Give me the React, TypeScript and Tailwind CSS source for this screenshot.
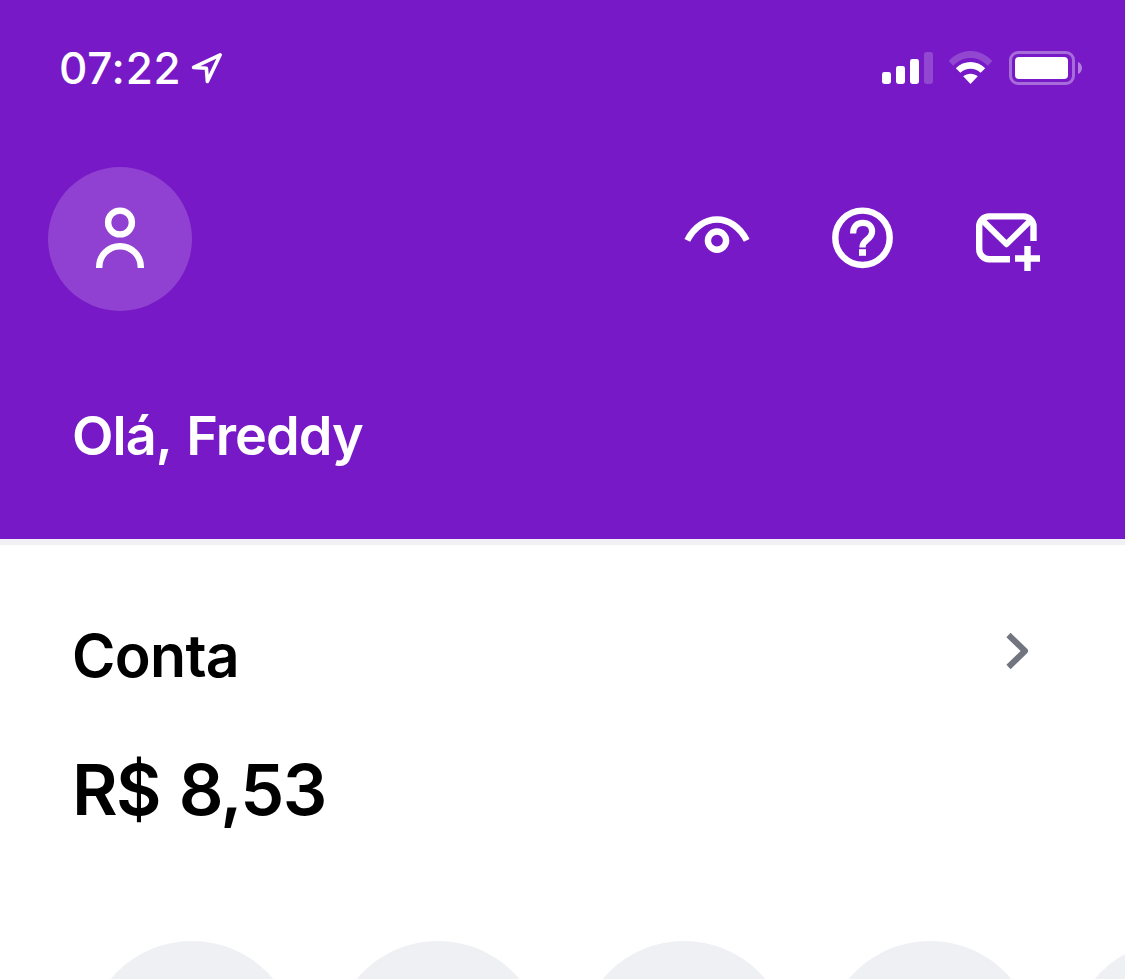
function StatusBar() {
  return (
    <div className="flex h-[136px] items-center pr-[42px] pl-[59px]">
      <span className="text-[44px] leading-none font-medium tracking-[0.7px]">07:22</span>
      <svg className="mt-px ml-[9px]" width="34" height="34" viewBox="0 0 34 34" fill="none">
        <path
          d="M30.2 2.8 3.6 15.4 16.4 16.3 17.4 29.5Z"
          stroke="currentColor"
          strokeWidth="3.6"
          strokeLinejoin="round"
        />
      </svg>
      <div className="ml-auto flex items-center">
        <svg width="51" height="34" viewBox="0 0 51 34" fill="currentColor">
          <rect x="0" y="21" width="9" height="12" rx="2.4" />
          <rect x="14" y="15" width="9" height="18" rx="2.4" />
          <rect x="28" y="8" width="9" height="25" rx="2.4" />
          <rect x="42" y="1" width="9" height="32" rx="2.4" opacity="0.2" />
        </svg>
        <svg className="mr-4 ml-[15px]" width="45" height="34" viewBox="0 0 45 34" fill="currentColor">
          <path
            d="M.7 10.1C13-3.4 32-3.4 44.3 10.1L39.8 14.7C30 4.3 15 4.3 5.2 14.7Z"
            opacity="0.2"
          />
          <path d="M7.8 17.3C16 9 29 9 37.2 17.3L32.6 21.8C27 16.5 18 16.5 12.4 21.8Z" />
          <path d="M15.2 25.2C19.3 21.8 25.7 21.8 29.8 25.2L22.5 33Z" />
        </svg>
        <svg width="74" height="34" viewBox="0 0 74 34" fill="currentColor">
          <rect
            x="1.5"
            y="1.5"
            width="63"
            height="31"
            rx="7.5"
            fill="none"
            stroke="currentColor"
            strokeWidth="3"
            opacity="0.36"
          />
          <rect x="6" y="6" width="53" height="22" rx="4" />
          <path d="M69 11C74.3 13 74.3 21 69 23Z" opacity="0.45" />
        </svg>
      </div>
    </div>
  );
}

function UserIcon() {
  return (
    <svg
      className="-mt-[5px]"
      width="48"
      height="62"
      viewBox="0 0 48 62"
      fill="none"
      stroke="currentColor"
      strokeWidth="6.4"
    >
      <circle cx="24" cy="16.5" r="11.9" />
      <path d="M3.2 62V61A20.8 20.8 0 0 1 44.8 61V62" />
    </svg>
  );
}

function EyeIcon() {
  return (
    <svg width="66" height="38" viewBox="0 0 66 38" fill="none" stroke="currentColor">
      <path d="M3.3 24.4C17.5-3.4 48.5-3.4 62.7 24.4" strokeWidth="6.4" />
      <circle cx="33" cy="24.6" r="9.1" strokeWidth="6.4" />
    </svg>
  );
}

function HelpIcon() {
  return (
    <svg width="62" height="62" viewBox="0 0 62 62" fill="none" stroke="currentColor">
      <circle cx="31.5" cy="30.8" r="27.2" strokeWidth="6.4" />
      <path
        d="M22.1 26.4C22.1 19.5 25.9 15.9 31.7 15.9C37.5 15.9 41.1 19.4 41.1 24.3C41.1 28.3 39.2 30.4 36 32.7C32.7 35.1 31.5 36.9 31.5 40.4"
        strokeWidth="6.2"
      />
      <path d="M31.5 42.2V48.8" strokeWidth="7" />
    </svg>
  );
}

function InviteIcon() {
  return (
    <svg width="64" height="58" viewBox="0 0 64 58" fill="none" stroke="currentColor" strokeWidth="6.4">
      <path d="M34 46.2H13.2A10 10 0 0 1 3.2 36.2V13.2A10 10 0 0 1 13.2 3.4H47.5A10 10 0 0 1 57.5 13.2V28" />
      <path d="M6 7 30.5 31.2 55 7" strokeLinejoin="round" strokeWidth="6" />
      <path d="M51.5 33V58M39 45.5H64" />
    </svg>
  );
}

export default function App() {
  return (
    <div className="h-[979px] w-[1125px] overflow-hidden bg-white font-['Inter',sans-serif] text-black">
      <header className="h-[539px] bg-[#7719c6] text-white">
        <StatusBar />
        <div className="mt-[31px] flex items-center pr-[85px] pl-12">
          <button className="flex size-36 items-center justify-center rounded-full bg-[#9041d1]">
            <UserIcon />
          </button>
          <div className="ml-auto flex items-center">
            <button className="mr-[81px] -mt-2">
              <EyeIcon />
            </button>
            <button className="mr-[83px] -mt-0.5">
              <HelpIcon />
            </button>
            <button className="mt-1.5">
              <InviteIcon />
            </button>
          </div>
        </div>
        <h1 className="mt-[85px] ml-[72px] text-[54px] leading-[80px] font-semibold tracking-[-1px] [word-spacing:3px]">
          Olá, Freddy
        </h1>
      </header>
      <div className="h-1.5 bg-[#f0f0f5]" />
      <main>
        <section className="pt-[71px] pr-[96px] pl-[72px]">
          <div className="flex items-center justify-between">
            <h2 className="text-[59px] leading-[80px] font-semibold tracking-[-0.7px]">Conta</h2>
            <svg className="-mt-2.5" width="24" height="38" viewBox="0 0 24 38" fill="none">
              <path d="M3.5 3 20 19 3.5 35" stroke="#72757f" strokeWidth="6" strokeLinejoin="round" />
            </svg>
          </div>
          <p className="mt-[54px] text-[70px] leading-[80px] font-semibold tracking-[-1.7px] [word-spacing:3px]">
            R$ 8,53
          </p>
        </section>
        <div className="mt-[111px] flex gap-[34px] pl-[86px]">
          {["pix", "pay", "transfer", "deposit", "recharge"].map((action) => (
            <div key={action} className="size-[212px] shrink-0 rounded-full bg-[#eff0f4]" />
          ))}
        </div>
      </main>
    </div>
  );
}
